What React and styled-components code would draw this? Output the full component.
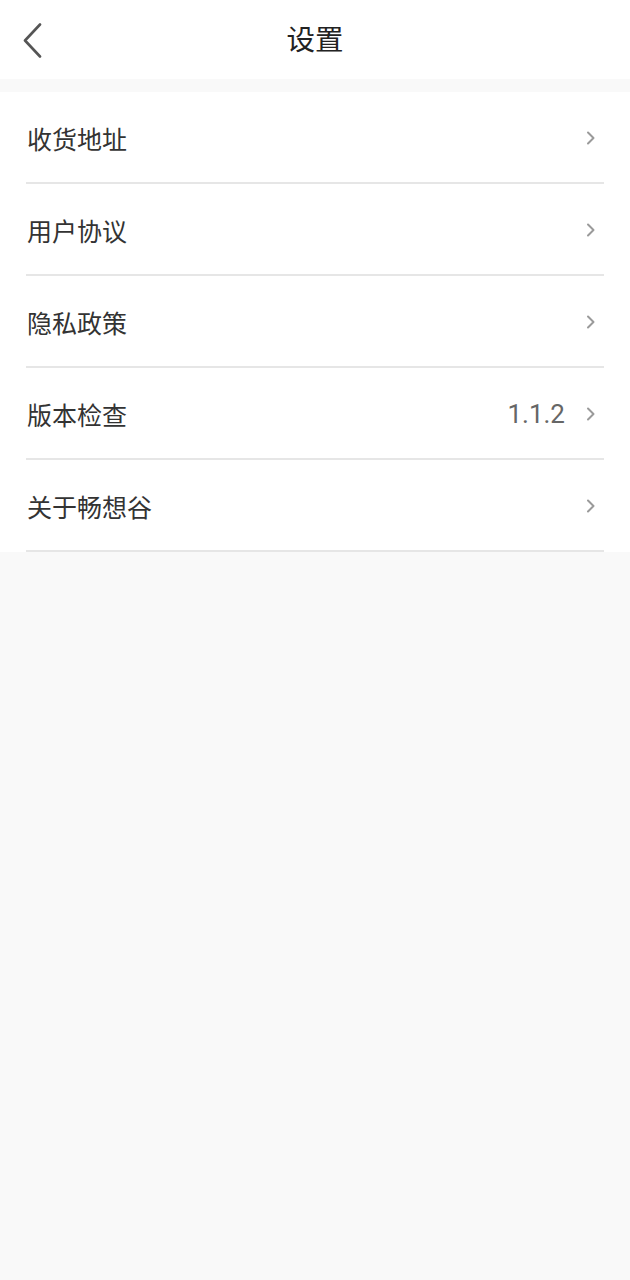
import React from "react";
import styled, { createGlobalStyle } from "styled-components";

const Global = createGlobalStyle`
  html, body { margin: 0; padding: 0; background: #f9f9f9; }
  body { font-family: "Noto Sans CJK SC", "Noto Sans", sans-serif; }
`;

const Page = styled.div`
  width: 630px;
  min-height: 1280px;
  background: #f9f9f9;
`;

const Header = styled.header`
  position: relative;
  height: 79px;
  background: #fff;
  display: flex;
  align-items: center;
  justify-content: center;
`;

const BackButton = styled.button`
  position: absolute;
  left: 18px;
  top: 20px;
  width: 28px;
  height: 40px;
  border: 0;
  padding: 0;
  background: transparent;
  display: flex;
  align-items: center;
  justify-content: center;
`;

const Title = styled.h1`
  margin: 0 0 2px;
  font-size: 28.5px;
  font-weight: 400;
  color: #222;
  line-height: 1;
`;

const List = styled.ul`
  list-style: none;
  margin: 13px 0 0;
  padding: 0 26px;
  background: #fff;
`;

const Row = styled.li`
  height: 90px;
  display: flex;
  align-items: center;
  border-bottom: 2px solid #e6e6e6;
`;

const Label = styled.span`
  flex: 1;
  font-size: 25px;
  color: #333;
  padding-left: 1px;
  padding-top: 1px;
`;

const Value = styled.span`
  font-family: Roboto, "Noto Sans", sans-serif;
  font-size: 26px;
  color: #666;
  margin-right: 21px;
  padding-top: 2px;
`;

const Arrow = styled.svg`
  width: 10px;
  height: 14px;
  margin-right: 8px;
  margin-top: 2px;
`;

const items = [
  { label: "收货地址" },
  { label: "用户协议" },
  { label: "隐私政策" },
  { label: "版本检查", value: "1.1.2" },
  { label: "关于畅想谷" },
];

export default function App() {
  return (
    <Page>
      <Global />
      <Header>
        <BackButton aria-label="返回">
          <svg width="20" height="35" viewBox="0 0 20 35">
            <path d="M18 1.5 L3 17.5 L18 33.5" fill="none" stroke="#555" strokeWidth="2.6" strokeLinecap="round" strokeLinejoin="round" />
          </svg>
        </BackButton>
        <Title>设置</Title>
      </Header>
      <List>
        {items.map((it) => (
          <Row key={it.label}>
            <Label>{it.label}</Label>
            {it.value && <Value>{it.value}</Value>}
            <Arrow viewBox="0 0 10 14">
              <path d="M2 1.5 L7.5 7 L2 12.5" fill="none" stroke="#9a9a9a" strokeWidth="2" strokeLinecap="round" strokeLinejoin="round" />
            </Arrow>
          </Row>
        ))}
      </List>
    </Page>
  );
}
